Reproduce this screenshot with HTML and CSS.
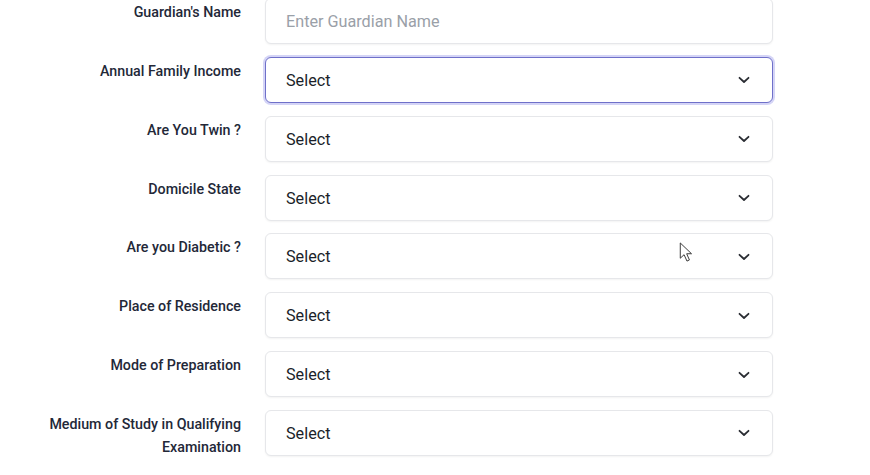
FILE: index.html
```html
<!DOCTYPE html>
<html>
<head>
<meta charset="utf-8">
<link rel="stylesheet" href="styles.css">
</head>
<body>
<form class="form">
  <div class="row">
    <label class="label">Guardian's Name</label>
    <div class="field"><span class="placeholder">Enter Guardian Name</span></div>
  </div>
  <div class="row">
    <label class="label">Annual Family Income</label>
    <div class="field select focused"><span>Select</span><svg class="chev" viewBox="0 0 12 8"><path d="M1.5 1.8 L6 6 L10.5 1.8"/></svg></div>
  </div>
  <div class="row">
    <label class="label">Are You Twin ?</label>
    <div class="field select"><span>Select</span><svg class="chev" viewBox="0 0 12 8"><path d="M1.5 1.8 L6 6 L10.5 1.8"/></svg></div>
  </div>
  <div class="row">
    <label class="label">Domicile State</label>
    <div class="field select"><span>Select</span><svg class="chev" viewBox="0 0 12 8"><path d="M1.5 1.8 L6 6 L10.5 1.8"/></svg></div>
  </div>
  <div class="row">
    <label class="label">Are you Diabetic ?</label>
    <div class="field select"><span>Select</span><svg class="chev" viewBox="0 0 12 8"><path d="M1.5 1.8 L6 6 L10.5 1.8"/></svg>
      <svg class="cursor" viewBox="0 0 14 22"><path d="M1 1 L1 17 L5 13.3 L8 20 L10.6 18.8 L7.7 12.3 L12.8 12.3 Z"/></svg>
    </div>
  </div>
  <div class="row">
    <label class="label">Place of Residence</label>
    <div class="field select"><span>Select</span><svg class="chev" viewBox="0 0 12 8"><path d="M1.5 1.8 L6 6 L10.5 1.8"/></svg></div>
  </div>
  <div class="row">
    <label class="label">Mode of Preparation</label>
    <div class="field select"><span>Select</span><svg class="chev" viewBox="0 0 12 8"><path d="M1.5 1.8 L6 6 L10.5 1.8"/></svg></div>
  </div>
  <div class="row">
    <label class="label">Medium of Study in Qualifying Examination</label>
    <div class="field select"><span>Select</span><svg class="chev" viewBox="0 0 12 8"><path d="M1.5 1.8 L6 6 L10.5 1.8"/></svg></div>
  </div>
</form>
</body>
</html>
```
FILE: styles.css
```css
html, body {
  margin: 0;
  padding: 0;
  background: #ffffff;
  overflow: hidden;
}
body {
  font-family: Roboto, "Noto Sans", sans-serif;
  color: #1f2433;
}
.form {
  margin-top: -2px;
  display: grid;
  row-gap: 12.85px;
}
.row {
  display: grid;
  grid-template-columns: 241px 508px;
  column-gap: 24px;
  align-items: start;
}
.label {
  padding-top: 3px;
  text-align: right;
  font-size: 14.25px;
  font-weight: 500;
  line-height: 23px;
  color: #232838;
}
.field {
  position: relative;
  box-sizing: border-box;
  height: 46px;
  border: 1px solid #e6e7ea;
  border-radius: 6px;
  box-shadow: 0 1px 2px rgba(0,0,0,0.05);
  padding: 1px 20px 0;
  display: flex;
  align-items: center;
  justify-content: space-between;
  font-size: 16.2px;
  color: #1b1f2a;
  background: #fff;
}
.placeholder {
  color: #9aa0a8;
}
.focused {
  border-color: #6f70c9;
  box-shadow: 0 0 0 2px #d4d4f6;
}
.chev {
  width: 12px;
  height: 8px;
  margin-right: 2px;
  fill: none;
  stroke: #2a2d33;
  stroke-width: 1.8;
  stroke-linecap: round;
  stroke-linejoin: round;
}
.cursor {
  position: absolute;
  left: 413px;
  top: 8px;
  width: 14px;
  height: 21px;
  fill: #ffffff;
  stroke: #333;
  stroke-width: 1;
  stroke-linejoin: round;
}
```
